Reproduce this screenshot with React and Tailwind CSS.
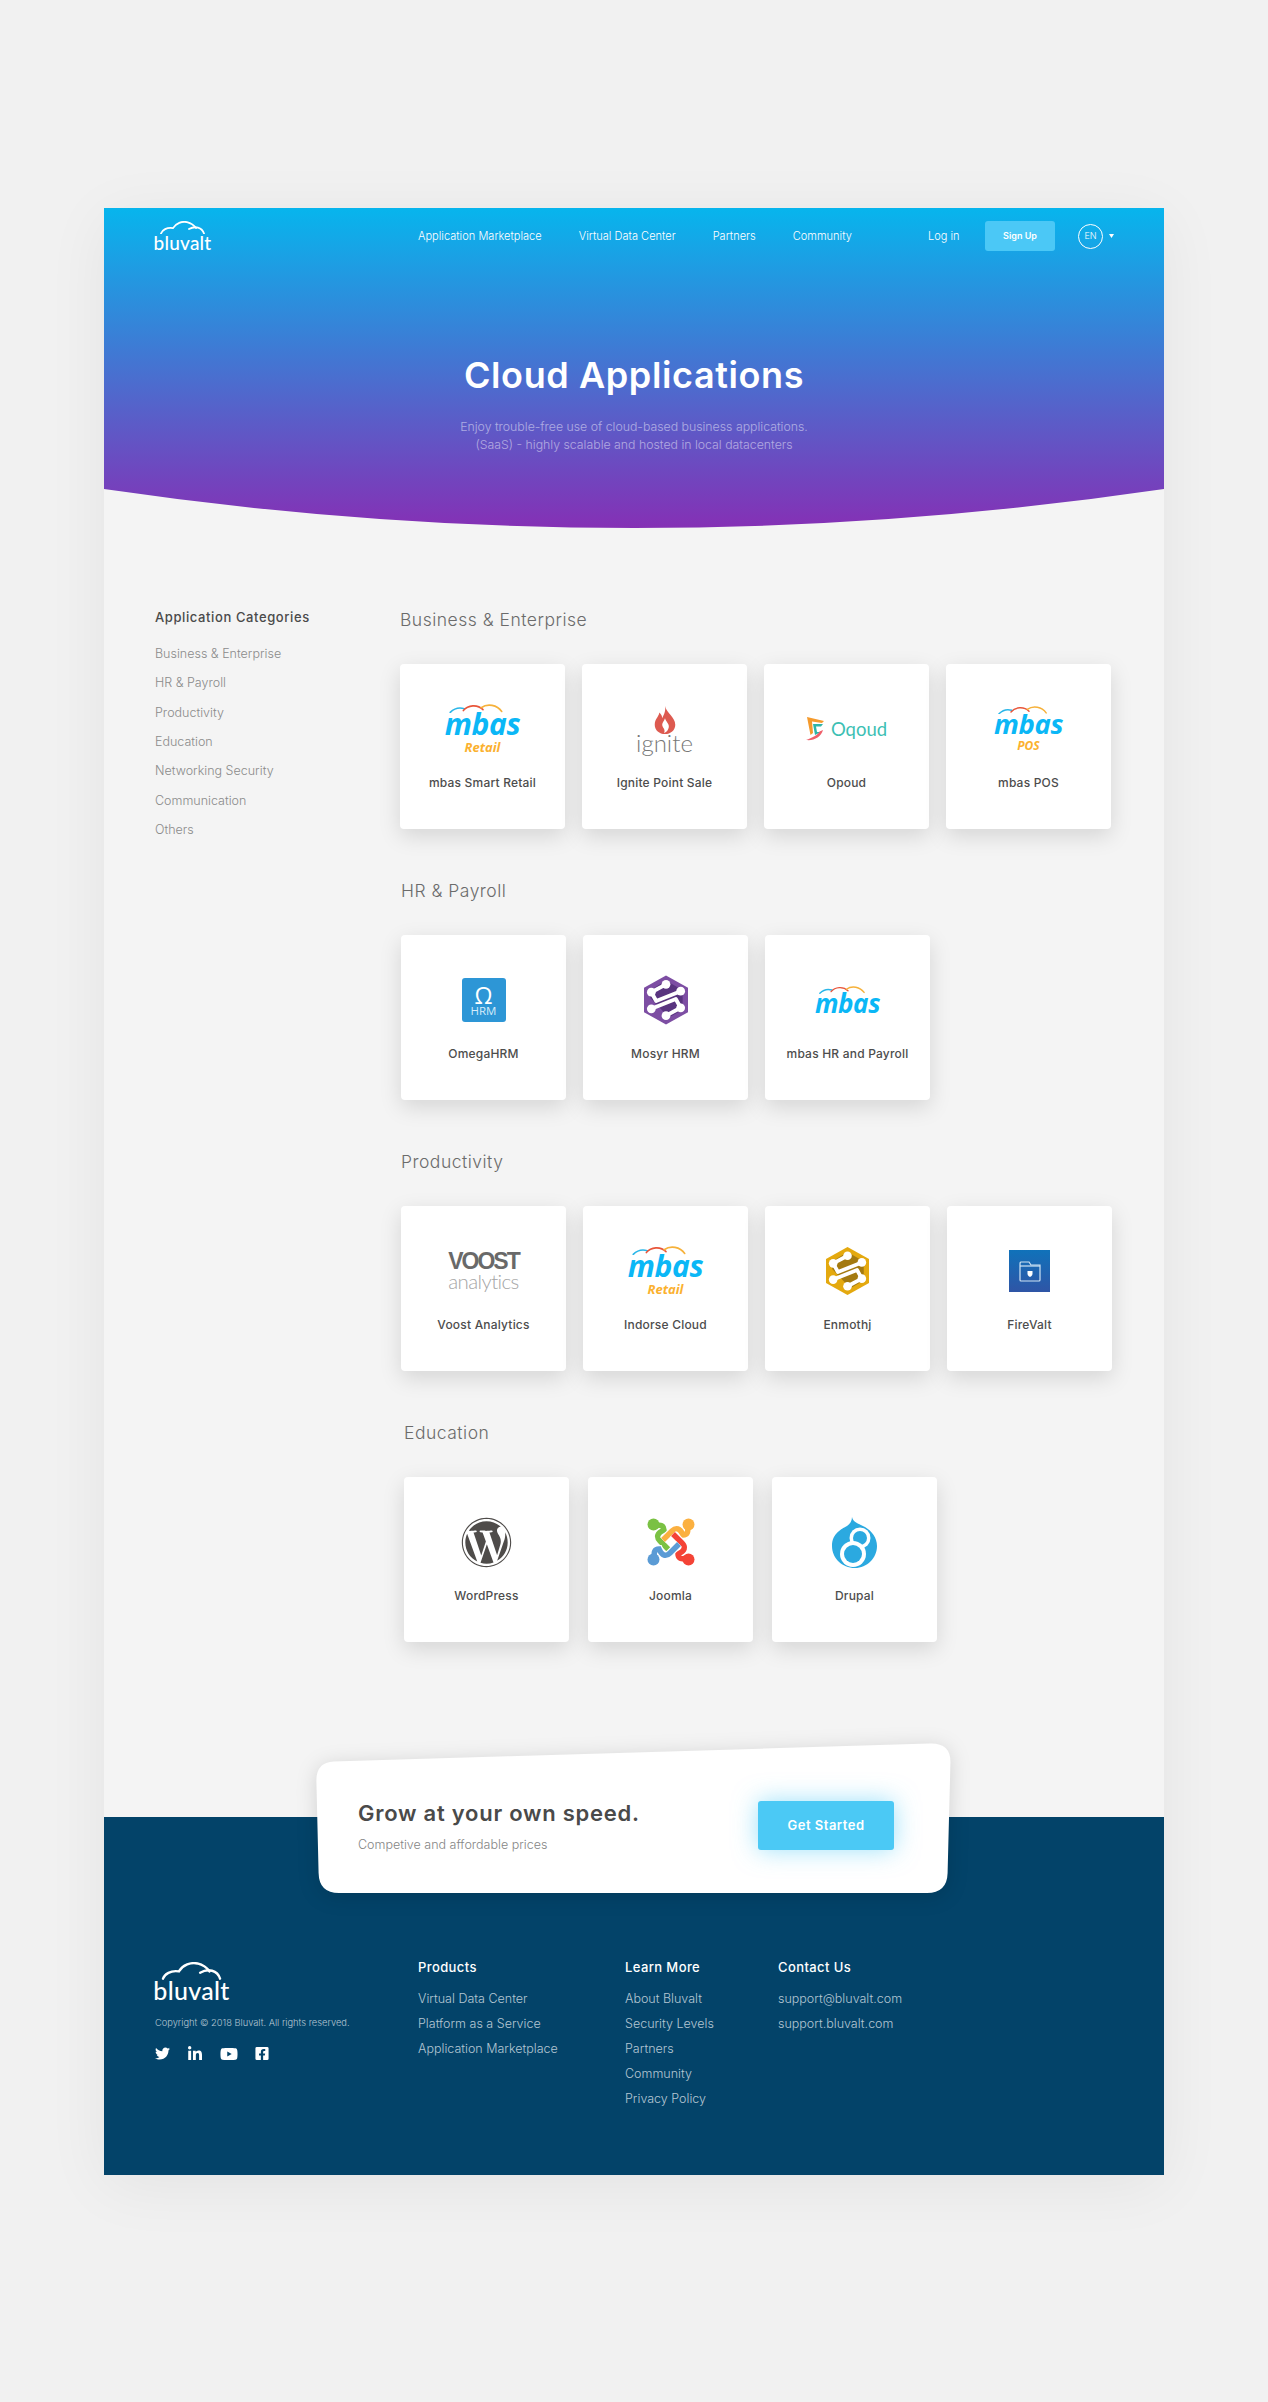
import React from 'react';
import { FaTwitter, FaLinkedinIn, FaYoutube, FaFacebookSquare, FaWordpress } from 'react-icons/fa';

const sections = [
  { title: 'Business & Enterprise', offset: 'ml-0', gap: 'gap-[17px]', items: [['mbas Smart Retail', 'mbasRetail'], ['Ignite Point Sale', 'ignite'], ['Opoud', 'oqoud'], ['mbas POS', 'mbasPos']] },
  { title: 'HR & Payroll', offset: 'ml-px', gap: 'gap-[17px]', items: [['OmegaHRM', 'omega'], ['Mosyr HRM', 'mosyr'], ['mbas HR and Payroll', 'mbasHr']] },
  { title: 'Productivity', offset: 'ml-px', gap: 'gap-[17px]', items: [['Voost Analytics', 'voost'], ['Indorse Cloud', 'mbasRetail'], ['Enmothj', 'enmothj'], ['FireValt', 'firevalt']] },
  { title: 'Education', offset: 'ml-[4px]', gap: 'gap-[19px]', items: [['WordPress', 'wordpress'], ['Joomla', 'joomla'], ['Drupal', 'drupal']] },
];

const categories = ['Business & Enterprise', 'HR & Payroll', 'Productivity', 'Education', 'Networking Security', 'Communication', 'Others'];

function BluvaltLogo({ width, textClass }) {
  return (
    <div className="flex flex-col items-center" style={{ width }}>
      <svg width={width} height={width * 0.24} viewBox="0 0 55 13" fill="none" stroke="#fff" strokeWidth="1.8" strokeLinecap="round">
        <path d="M6 12.5C7 9 12 6 18 7C21 2 27 0 32 1C36 2 39 4 41 7" />
        <path d="M34 8C40 4.5 47 6 49 12.5" />
      </svg>
      <span className={`font-['Lato',sans-serif] text-white font-medium ${textClass}`}>bluvalt</span>
    </div>
  );
}

function Mbas({ width, textClass, sub, subClass, gapClass }) {
  return (
    <div className="flex flex-col items-center" style={{ width }}>
      <svg width={width} height={width * 0.13} viewBox="0 0 72 10" fill="none" strokeWidth="1.7" strokeLinecap="round" className="-mb-[2px]">
        <path d="M1 9C6 4 11 3.5 16 5" stroke="#29b6e8" />
        <path d="M15 7C20 1 30 0 36 6" stroke="#e8553a" />
        <path d="M34 4C41 -1 51 1 56 8" stroke="#f6b13a" />
      </svg>
      <span className={`font-['Open_Sans',sans-serif] italic font-bold text-[#0bb7f6] leading-[0.85] tracking-[-0.4px] ${textClass}`}>mbas</span>
      {sub && <span className={`font-['Open_Sans',sans-serif] italic font-bold text-[#fbb12f] leading-none ${gapClass} ${subClass}`}>{sub}</span>}
    </div>
  );
}

function Ignite() {
  return (
    <div className="flex flex-col items-center">
      <svg width="22" height="28" viewBox="0 0 22 30">
        <path d="M11 0C13 8 22 12 22 20C22 26 17 30 11 30C5 30 0 26 0 20C0 14 4 12 5 7C7 9 8 11 8 13C10 9 12 5 11 0Z" fill="#dd5a50" />
        <path d="M11 13C12 17 16 19 15 23C14 27 12 28 10 29C12 25 8 23 8 20C8 18 10 16 11 13Z" fill="#fff" />
      </svg>
      <span className="font-['Lato',sans-serif] font-light text-[#777] text-[24px] leading-[20px] -mt-[1px]">ignite</span>
    </div>
  );
}

function Oqoud() {
  return (
    <div className="flex items-center gap-[3px]">
      <svg width="22" height="24" viewBox="0 0 22 24" fill="none">
        <path d="M1 0L18 4L16 6L6 4.5L7 16L4.5 18Z" fill="#f59a2c" />
        <path d="M7 7H17L15 9.5H10L11 15H15L9 18Z" fill="#2fb5a8" />
        <path d="M0 23C8 24 15 20 17 13L13.5 14.5C12 18 6 21 0 23Z" fill="#ef5f6a" />
      </svg>
      <span className="font-['Lato',sans-serif] font-normal text-[#3cbfb4] text-[18.5px] leading-none">Oqoud</span>
    </div>
  );
}

function Omega() {
  return (
    <div className="w-[44px] h-[44px] rounded-[3px] bg-[#2d96d6] flex flex-col items-center justify-center text-white font-['Open_Sans',sans-serif]">
      <span className="text-[23px] leading-[20px]">Ω</span>
      <span className="text-[11.5px] leading-[11px] text-[#d6ecfa]">HRM</span>
    </div>
  );
}

function Hex({ outer, inner, width, height }) {
  return (
    <svg width={width} height={height} viewBox="7.5 5 45 50">
      <path d="M30 5L52.5 17.5V42.5L30 55L7.5 42.5V17.5Z" fill={outer} />
      <path d="M30 10L47 20V40L33 48L14 28V20Z" fill={inner} />
      <g fill="none" stroke="#fff" strokeWidth="4" strokeLinejoin="round">
        <path d="M30 14L15 22L20 31L45 21" />
        <path d="M30 46L45 38L40 29L15 39" />
      </g>
      <g fill="#fff">
        <circle cx="30" cy="14" r="4.5" />
        <circle cx="15" cy="22" r="4.5" />
        <circle cx="45" cy="21" r="4.5" />
        <circle cx="30" cy="46" r="4.5" />
        <circle cx="45" cy="38" r="4.5" />
        <circle cx="15" cy="39" r="4.5" />
      </g>
    </svg>
  );
}

function Voost() {
  return (
    <div className="flex flex-col items-center">
      <span className="font-['Liberation_Sans',sans-serif] font-bold text-[#696969] text-[23px] leading-[20px] tracking-[-2px]">VOOST</span>
      <span className="font-['Lato',sans-serif] font-light text-[#a5a5a5] text-[20.5px] leading-[20px] tracking-[-0.6px]">analytics</span>
    </div>
  );
}

function Firevalt() {
  return (
    <div className="w-[41px] h-[42px] bg-[linear-gradient(to_bottom,#1072ba,#2f55a6)] flex items-center justify-center">
      <svg width="24" height="24" viewBox="0 0 24 24" fill="none" stroke="#cfe3f4" strokeWidth="1.2">
        <path d="M2 6V21C2 22 3 22 3 22H21C22 22 22 21 22 21V6H13L11 3H3C2 3 2 4 2 6Z" />
        <path d="M2 7H22" />
        <path d="M9.5 12H14.5V15C14.5 17 12 18 12 18C12 18 9.5 17 9.5 15Z" fill="#fff" stroke="none" />
      </svg>
    </div>
  );
}

function Joomla() {
  const piece = 'M8 8C14 6 17 8 17 12C10 15 9 19 13 23L22 32';
  const parts = [
    ['#7ac143', 0],
    ['#fbb040', 90],
    ['#f44336', 180],
    ['#5b9bd5', 270],
  ];
  return (
    <svg width="48" height="48" viewBox="0 0 48 48" fill="none" strokeLinecap="butt">
      {parts.map(([color, angle]) => (
        <g key={color} transform={`rotate(${angle} 24 24)`}>
          <path d={piece} stroke="#fff" strokeWidth="8" />
          <path d={piece} stroke={color} strokeWidth="5.5" />
          <circle cx="6.5" cy="6.5" r="6" fill={color} />
        </g>
      ))}
    </svg>
  );
}

function Drupal() {
  return (
    <svg width="45" height="51" viewBox="0 0 45 51">
      <path d="M20 0C21 6 28 7 33 10C40 14 45 21 45 29C45 41 35 51 23 51C10 51 0 41 0 29C0 16 10 12 15 9C18 7 20 4 20 0Z" fill="#2ba9e0" />
      <circle cx="28" cy="21" r="10.5" fill="#fff" />
      <circle cx="28" cy="21" r="7" fill="#2ba9e0" />
      <circle cx="21" cy="37" r="13" fill="#fff" />
      <circle cx="21" cy="37" r="9" fill="#2ba9e0" />
    </svg>
  );
}

function Logo({ kind }) {
  switch (kind) {
    case 'mbasRetail':
      return <Mbas width={72} textClass="text-[30px]" sub="Retail" subClass="text-[13px]" gapClass="mt-[4px]" />;
    case 'mbasPos':
      return <Mbas width={66} textClass="text-[27.5px]" sub="POS" subClass="text-[12px]" gapClass="mt-[5px]" />;
    case 'mbasHr':
      return <Mbas width={62} textClass="text-[26px]" />;
    case 'ignite':
      return <Ignite />;
    case 'oqoud':
      return <Oqoud />;
    case 'omega':
      return <Omega />;
    case 'mosyr':
      return <Hex outer="#7d4ea3" inner="#59347f" width={44} height={50} />;
    case 'enmothj':
      return <Hex outer="#e4a90f" inner="#a47a10" width={43} height={48} />;
    case 'voost':
      return <Voost />;
    case 'firevalt':
      return <Firevalt />;
    case 'wordpress':
      return <FaWordpress className="w-[51px] h-[51px] text-[#4f4c4a]" />;
    case 'joomla':
      return <Joomla />;
    default:
      return <Drupal />;
  }
}

function AppCard({ name, logo }) {
  return (
    <div className="w-[165px] h-[165px] rounded-[4px] bg-white shadow-[0_7px_22px_rgba(0,0,0,0.13)] pt-[20px] flex flex-col items-center">
      <div className="h-[90px] flex items-center justify-center">
        <Logo kind={logo} />
      </div>
      <span className="text-[12px] leading-[18px] font-[450] text-[#4d4d4d] tracking-[0.2px]">{name}</span>
    </div>
  );
}

function FooterColumn({ title, items, widthClass }) {
  return (
    <div className={widthClass}>
      <h4 className="text-[13px] leading-[18px] font-medium text-white tracking-[0.4px]">{title}</h4>
      <ul className="mt-[9.5px] text-[12.5px] font-light text-[#b4c6d3]">
        {items.map((item) => (
          <li key={item} className="h-[25px] leading-[25px] whitespace-nowrap">{item}</li>
        ))}
      </ul>
    </div>
  );
}

export default function App() {
  return (
    <div className="min-h-[2402px] bg-[#f1f1f1] pt-[208px] font-['Inter',sans-serif]">
      <div className="relative ml-[104px] w-[1060px] h-[1967px] bg-[#f4f4f4] shadow-[0_10px_60px_rgba(0,0,0,0.06)]">
        <header className="h-[320px] bg-[linear-gradient(to_bottom,#07b5ed,#8530b5)] text-white [clip-path:path('M0_0H1060V281Q530_359_0_281Z')]">
          <nav className="h-[56px] flex items-center pl-[51px] text-[11px] font-light whitespace-nowrap">
            <BluvaltLogo width={55} textClass="text-[19px] leading-[17px] tracking-[0.2px]" />
            <div className="ml-[208px] flex gap-[37px] w-[432px] tracking-[0.03px]">
              <span>Application Marketplace</span>
              <span>Virtual Data Center</span>
              <span>Partners</span>
              <span>Community</span>
            </div>
            <span className="ml-[78px] w-[32px]">Log in</span>
            <span className="ml-[25px] w-[70px] h-[30px] rounded-[3px] bg-[#4bc8f6] flex items-center justify-center text-[9px] font-semibold">Sign Up</span>
            <span className="ml-[23px] w-[25px] h-[25px] rounded-full border border-white flex items-center justify-center text-[9px]">EN</span>
            <svg width="5" height="4" viewBox="0 0 5 4" className="ml-[6px]"><path d="M0 0H5L2.5 4Z" fill="#fff" /></svg>
          </nav>
          <h1 className="mt-[89px] text-center text-[36px] leading-[44px] font-semibold tracking-[0.6px]">Cloud Applications</h1>
          <p className="mt-[21px] text-center text-[12.3px] leading-[18px] font-light text-white/50">
            Enjoy trouble-free use of cloud-based business applications.
            <br />
            (SaaS) - highly scalable and hosted in local datacenters
          </p>
        </header>

        <main className="flex pl-[51px]">
          <aside className="w-[245px] pt-[80px]">
            <h3 className="text-[13px] leading-[18px] font-medium text-[#4a4a4a] tracking-[0.6px]">Application Categories</h3>
            <ul className="mt-[13.5px] text-[12.5px] font-light text-[#8b8b8b]">
              {categories.map((c) => (
                <li key={c} className="h-[29.4px] flex items-center">{c}</li>
              ))}
            </ul>
          </aside>
          <div className="pt-[80px] flex flex-col gap-[50px]">
            {sections.map((s) => (
              <section key={s.title} className={s.offset}>
                <h2 className="h-[24px] leading-[24px] text-[17.5px] font-light text-[#6b6b6b] tracking-[0.5px]">{s.title}</h2>
                <div className={`mt-[32px] flex ${s.gap}`}>
                  {s.items.map(([name, logo]) => (
                    <AppCard key={name} name={name} logo={logo} />
                  ))}
                </div>
              </section>
            ))}
          </div>
        </main>

        <section className="relative z-10 ml-[212px] mt-[101px] -mb-[76px] w-[635px] h-[150px] pl-[42px] pr-[57px] pt-[57px] flex justify-between items-start">
          <svg width="635" height="150" viewBox="0 0 635 150" className="absolute left-0 top-0 drop-shadow-[0_3px_10px_rgba(0,0,0,0.14)]">
            <path d="M0.4 38Q0 19 18 18.4L614 0.6Q635 0 634.4 20L631.6 130Q631 150 611 150H23Q3 150 2.6 130Z" fill="#fff" />
          </svg>
          <div className="relative">
            <h2 className="text-[22px] leading-[26px] font-semibold text-[#4a4a4a] tracking-[0.75px]">Grow at your own speed.</h2>
            <p className="mt-[10px] text-[12.5px] leading-[18px] font-light text-[#858585]">Competive and affordable prices</p>
          </div>
          <button className="relative mt-px w-[136px] h-[49px] rounded-[3px] bg-[#4bc9f5] text-white text-[13px] font-semibold tracking-[0.5px] shadow-[0_0_24px_rgba(75,201,245,0.55)]">Get Started</button>
        </section>

        <footer className="h-[358px] bg-[#034369] pt-[141px] pl-[51px] flex">
          <div className="w-[263px] pt-[4px]">
            <BluvaltLogo width={73} textClass="text-[25px] leading-[21px] tracking-[0.3px]" />
            <p className="mt-[15px] text-[9.3px] leading-[14px] font-light text-[#b4c6d3] whitespace-nowrap">Copyright © 2018 Bluvalt. All rights reserved.</p>
            <div className="mt-[16px] flex items-center gap-[17px] text-white">
              <FaTwitter className="w-[15px] h-[15px]" />
              <FaLinkedinIn className="w-[16px] h-[16px]" />
              <FaYoutube className="w-[18px] h-[16px]" />
              <FaFacebookSquare className="w-[14px] h-[15px]" />
            </div>
          </div>
          <FooterColumn title="Products" widthClass="w-[207px]" items={['Virtual Data Center', 'Platform as a Service', 'Application Marketplace']} />
          <FooterColumn title="Learn More" widthClass="w-[153px]" items={['About Bluvalt', 'Security Levels', 'Partners', 'Community', 'Privacy Policy']} />
          <FooterColumn title="Contact Us" widthClass="w-[130px]" items={['support@bluvalt.com', 'support.bluvalt.com']} />
        </footer>
      </div>
    </div>
  );
}
